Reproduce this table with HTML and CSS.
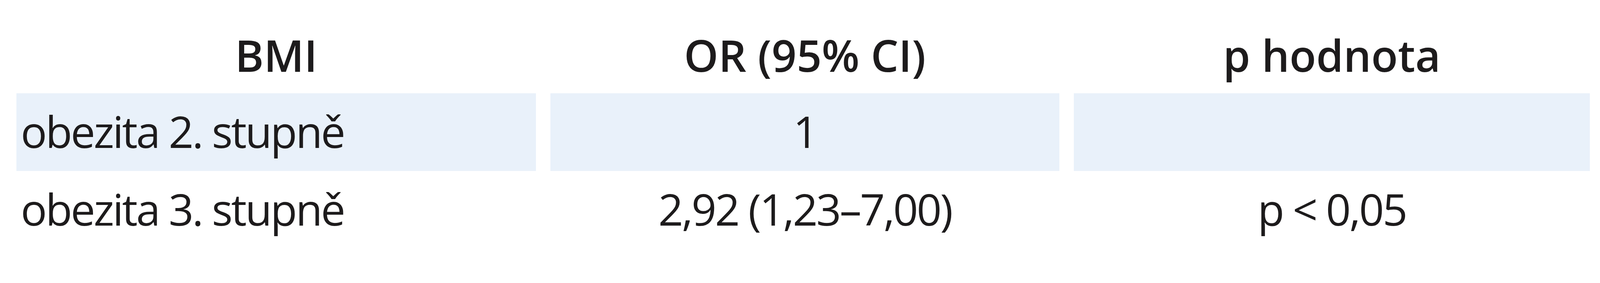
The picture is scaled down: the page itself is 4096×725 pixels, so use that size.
FILE: index.html
```html
<!DOCTYPE html>
<html lang="cs">
<head>
<meta charset="utf-8">
<title>BMI OR</title>
<link rel="stylesheet" href="styles.css">
</head>
<body>
<div class="table">
  <div class="cell head">BMI</div>
  <div class="cell head">OR (95% CI)</div>
  <div class="cell head">p hodnota</div>

  <div class="cell shade first">obezita 2. stupně</div>
  <div class="cell shade">1</div>
  <div class="cell shade"></div>

  <div class="cell first">obezita 3. stupně</div>
  <div class="cell">2,92 (1,23–7,00)</div>
  <div class="cell">p &lt; 0,05</div>
</div>
</body>
</html>
```

FILE: styles.css
```css
html, body {
  margin: 0;
  padding: 0;
  background: #ffffff;
}

body {
  width: 4096px;
  height: 725px;
  overflow: hidden;
  font-family: "Open Sans", "Noto Sans", sans-serif;
  color: #1d1b1c;
}

.table {
  display: grid;
  grid-template-columns: 1330px 1303px 1321px;
  grid-auto-rows: 199px;
  column-gap: 37px;
  padding: 40px 0 0 42px;
}

.cell {
  font-size: 112px;
  line-height: 193px;
  padding-bottom: 6px;
  text-align: center;
  letter-spacing: -4px;
  white-space: nowrap;
  overflow: hidden;
}

.cell.head {
  font-weight: 600;
  line-height: 185px;
  padding-top: 8px;
  letter-spacing: 0;
}

.cell.first {
  text-align: left;
  padding-left: 11px;
}

.cell.shade {
  background: #e9f1fa;
}
```
